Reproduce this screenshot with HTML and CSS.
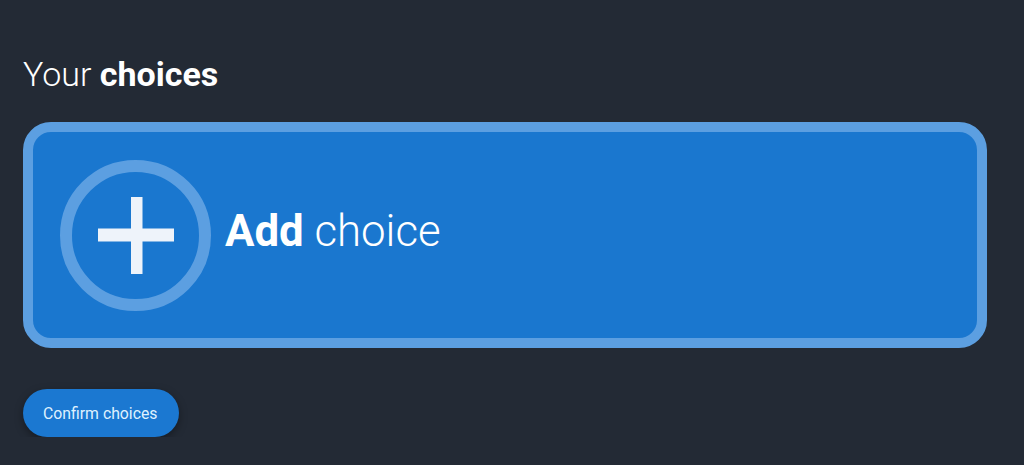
FILE: index.html
```html
<!DOCTYPE html>
<html>
<head>
<meta charset="utf-8">
<link rel="stylesheet" href="styles.css">
</head>
<body>
<main class="page">
  <h1 class="title">Your <b>choices</b></h1>
  <button class="add-card" type="button">
    <span class="add-icon">
      <svg width="76" height="77" viewBox="0 0 76 77"><rect x="33" y="0" width="11.5" height="77" fill="#eef3fa"/><rect x="0" y="31.5" width="76" height="13" fill="#eef3fa"/></svg>
    </span>
    <span class="add-label"><b>Add</b> choice</span>
  </button>
  <button class="confirm" type="button">Confirm choices</button>
</main>
</body>
</html>
```
FILE: styles.css
```css
html, body {
  margin: 0;
  padding: 0;
  background: #232a35;
  font-family: Roboto, "Noto Sans", sans-serif;
}
.page {
  padding: 50px 37px 0 23px;
  display: flex;
  flex-direction: column;
  align-items: flex-start;
}
.title {
  margin: 0;
  font-size: 34px;
  font-weight: 300;
  color: #ffffff;
  line-height: 48px;
}
.title b {
  font-weight: 700;
}
.add-card {
  margin-top: 24px;
  box-sizing: border-box;
  width: 964px;
  height: 226px;
  border: 10px solid #5c9fe1;
  border-radius: 28px;
  background: #1a77cf;
  display: flex;
  align-items: center;
  padding: 0 0 0 27px;
  gap: 14px;
  font-family: Roboto, "Noto Sans", sans-serif;
  cursor: pointer;
}
.add-icon {
  box-sizing: border-box;
  width: 151px;
  height: 151px;
  border-radius: 50%;
  border: 12px solid #5c9fe1;
  display: flex;
  align-items: center;
  justify-content: center;
}
.add-icon svg {
  display: block;
}
.add-label {
  font-size: 43.8px;
  font-weight: 300;
  color: #ffffff;
  margin-bottom: 8px;
}
.add-label b {
  font-weight: 700;
}
.confirm {
  margin-top: 41px;
  height: 48px;
  padding: 0 21px 0 20px;
  border: none;
  border-radius: 24px;
  background: #1b78d1;
  color: #dff1ff;
  font-family: Roboto, "Noto Sans", sans-serif;
  font-size: 15.8px;
  font-weight: 400;
  box-shadow: 0 3px 8px rgba(0, 0, 0, 0.35);
  cursor: pointer;
}
```
